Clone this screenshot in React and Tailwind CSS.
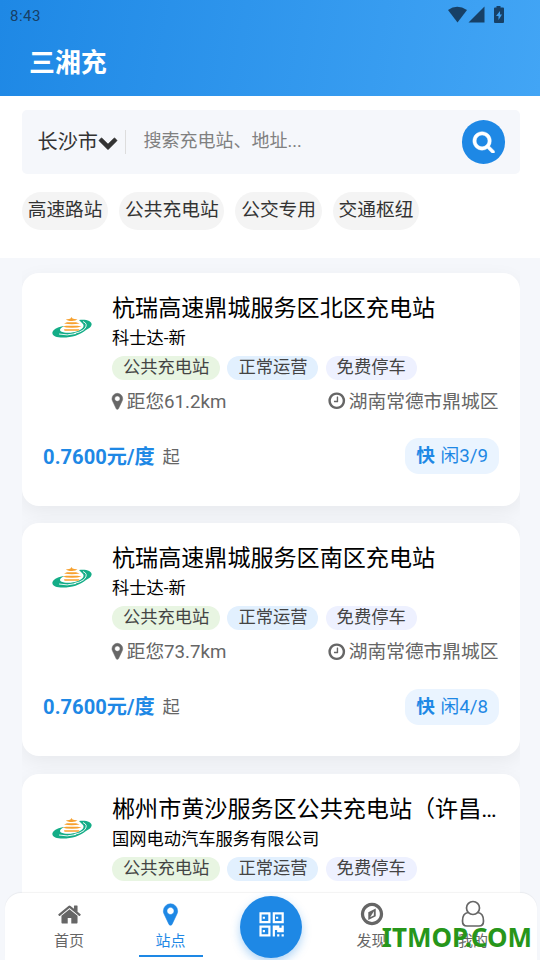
import { useState } from "react";

const ICONS = {
  home: "M1472 992v480q0 26-19 45t-45 19h-384v-384h-256v384h-384q-26 0-45-19t-19-45v-480q0-1 .5-3t.5-3l575-474 575 474q1 2 1 6zm223-69l-62 74q-8 9-21 11h-3q-13 0-21-7l-692-577-692 577q-12 8-24 7-13-2-21-11l-62-74q-8-10-7-23.5t11-21.5l719-599q32-26 76-26t76 26l244 204v-195q0-14 9-23t23-9h192q14 0 23 9t9 23v408l219 182q10 8 11 21.5t-7 23.5z",
  marker: "M1152 640q0-106-75-181t-181-75-181 75-75 181 75 181 181 75 181-75 75-181zm256 0q0 109-33 179l-364 774q-16 33-47.5 52t-67.5 19-67.5-19-46.5-52l-365-774q-33-70-33-179 0-212 150-362t362-150 362 150 150 362z",
  clock: "M1024 544v448q0 14-9 23t-23 9h-320q-14 0-23-9t-9-23v-64q0-14 9-23t23-9h224v-352q0-14 9-23t23-9h64q14 0 23 9t9 23zm416 352q0-148-73-273t-198-198-273-73-273 73-198 198-73 273 73 273 198 198 273 73 273-73 198-198 73-273zm224 0q0 209-103 385.5t-279.5 279.5-385.5 103-385.5-103-279.5-279.5-103-385.5 103-385.5 279.5-279.5 385.5-103 385.5 103 279.5 279.5 103 385.5z",
  search: "M1216 832q0-185-131.5-316.5t-316.5-131.5-316.5 131.5-131.5 316.5 131.5 316.5 316.5 131.5 316.5-131.5 131.5-316.5zm512 832q0 52-38 90t-90 38q-54 0-90-38l-343-342q-179 124-399 124-143 0-273.5-55.5t-225-150-150-225-55.5-273.5 55.5-273.5 150-225 225-150 273.5-55.5 273.5 55.5 225 150 150 225 55.5 273.5q0 220-124 399l343 343q37 37 37 90z",
  chevron: "M1683 808l-742 741q-19 19-45 19t-45-19l-742-741q-19-19-19-45.5t19-45.5l166-165q19-19 45-19t45 19l531 531 531-531q19-19 45-19t45 19l166 165q19 19 19 45.5t-19 45.5z",
  compass: "M768 1121l256-128v-290zm384-609v542l-512 256v-542zm288 384q0-148-73-273t-198-198-273-73-273 73-198 198-73 273 73 273 198 198 273 73 273-73 198-198 73-273zm224 0q0 209-103 385.5t-279.5 279.5-385.5 103-385.5-103-279.5-279.5-103-385.5 103-385.5 279.5-279.5 385.5-103 385.5 103 279.5 279.5 103 385.5z",
  qrcode: "M576 1152v128h-128v-128h128zm0-768v128h-128v-128h128zm768 0v128h-128v-128h128zm-960 1023h384v-383h-384v383zm0-767h384v-384h-384v384zm768 0h384v-384h-384v384zm-256 256v640h-640v-640h640zm512 512v128h-128v-128h128zm256 0v128h-128v-128h128zm0-512v384h-384v-128h-128v384h-128v-640h384v128h128v-128h128zm-768-768v640h-640v-640h640zm768 0v640h-640v-640h640z"
};

const categories = ["高速路站", "公共充电站", "公交专用", "交通枢纽"];

const stations = [
  {
    id: 1,
    name: "杭瑞高速鼎城服务区北区充电站",
    operator: "科士达-新",
    distance: "61.2km",
    address: "湖南常德市鼎城区",
    price: "0.7600",
    free: "3/9"
  },
  {
    id: 2,
    name: "杭瑞高速鼎城服务区南区充电站",
    operator: "科士达-新",
    distance: "73.7km",
    address: "湖南常德市鼎城区",
    price: "0.7600",
    free: "4/8"
  },
  {
    id: 3,
    name: "郴州市黄沙服务区公共充电站（许昌方向）",
    operator: "国网电动汽车服务有限公司"
  }
];

function Icon({ name, className, bold = 0 }) {
  return (
    <svg viewBox="0 0 1792 1792" fill="currentColor" stroke="currentColor" strokeWidth={bold} className={className}>
      <path d={ICONS[name]} />
    </svg>
  );
}

function StatusBar() {
  return (
    <div className="flex h-[30px] items-center justify-between pl-[10px] pr-[35px] text-[#174066]">
      <span className="mt-[2px] text-[15px] font-[450] tracking-[0.500px]">8:43</span>
      <svg width="58" height="18" viewBox="0 0 58 18" fill="currentColor">
        <path d="M1 4Q10 -2.5 20 4L10.5 16.5Z" />
        <path d="M37.5 0.5V16.5H21.5Z" />
        <path d="M49.5 0h4v1.5H56a1 1 0 0 1 1 1V16a1 1 0 0 1-1 1h-8a1 1 0 0 1-1-1V2.500a1 1 0 0 1 1-1h1.500z" />
        <path d="M53 5l-4 5h2.500v4l3.500-5.500h-2z" fill="#3d9ff2" />
      </svg>
    </div>
  );
}

// Operator logo: pavilion on a green swirl
function StationLogo() {
  return (
    <svg width="40" height="24" viewBox="0 0 40 24" className="mt-[24px] shrink-0">
      <path
        d="M27 4C35 3 40.500 5.500 39.500 9C39 11 37 12.500 34 14C28 19 20 21.500 11 21.500C4 21.500 -0.500 19.500 0.500 16C2 12.500 7 10.500 12.500 10C8 12 7 14 9 15.500C13 17.500 21 17 26 15C31 13 33 10 30.500 7.500Z"
        fill="#14ad87"
      />
      <path d="M7 18Q15 20 24 17.500M31 5.500Q37 8 32 13.500Q28 16.500 22 17.500" stroke="white" strokeWidth="0.900" fill="none" />
      <path
        d="M19.500 1L20.500 2.500Q23 3.500 25.500 3.200Q24 5 20 5Q15 5 14 3.200Q17 3.500 18.500 2.500ZM15 6.200H24L27.500 7.500Q20 8.800 12 7.500ZM14 9.800H25.500L29.500 10.500Q26 11.700 20 11.700Q13 11.700 11 10.500ZM12 13.200H27.500L26.500 14.800H12.500Z"
        fill="#f7a12f"
      />
    </svg>
  );
}

function StationCard({ station }) {
  return (
    <div className="h-[233.300px] rounded-[17px] bg-white px-[21.600px] pt-[19px] shadow-[0_6px_20px_rgba(0,0,0,0.06)]">
      <div className="flex">
        <div className="flex w-[68.400px] shrink-0 pl-[8.500px]">
          <StationLogo />
        </div>
        <div className="min-w-0 flex-1">
          <h2 className="-mr-[4px] truncate text-[23.080px] leading-[34px] text-black">{station.name}</h2>
          <p className="-mt-px text-[17.280px] leading-[26px] text-black">{station.operator}</p>
          <div className="mt-[5px] flex gap-[7.300px] text-[17.300px] leading-[22px] text-[#444]">
            <span className="h-6 rounded-full bg-[#e8f5e2] px-[10.900px]">公共充电站</span>
            <span className="h-6 rounded-full bg-[#e2f0fe] px-[10.900px]">正常运营</span>
            <span className="h-6 rounded-full bg-[#eef1ff] px-[10.900px]">免费停车</span>
          </div>
          {station.distance && (
            <div className="mt-[8px] flex justify-between text-[18.720px] leading-[28px] text-[#666]">
              <span className="flex items-center">
                <Icon name="marker" bold={50} className="-ml-[4px] -mt-px size-[18.700px]" />
                距您{station.distance}
              </span>
              <span className="flex items-center">
                <Icon name="clock" className="-mt-px mr-[2px] size-[19.500px]" />
                {station.address}
              </span>
            </div>
          )}
        </div>
      </div>
      {station.price && (
        <div className="mt-[22px] flex items-center justify-between">
          <div className="-ml-[0.500px] mt-[2px] flex items-center">
            <span className="text-[20.160px] font-bold text-[#1e88e5]">{station.price}元/度</span>
            <span className="ml-[8px] mt-[2px] text-[17.280px] text-[#666]">起</span>
          </div>
          <div className="-mr-[0.500px] mt-[0.400px] flex h-9 items-center rounded-[14px] bg-[#eaf4ff] px-[11px] text-[18.720px] text-[#1e88e5]">
            <span className="mr-[5.500px] font-bold">快</span>
            <span>闲{station.free}</span>
          </div>
        </div>
      )}
    </div>
  );
}

function TabItem({ label, active, onClick, children }) {
  return (
    <button
      onClick={onClick}
      className={`flex h-full w-[64px] flex-col items-center border-b-2 pt-[7.500px] ${
        active ? "border-[#1e88e5] text-[#1e88e5]" : "border-transparent text-[#666]"
      }`}
    >
      <span className="flex h-[27px] items-center">{children}</span>
      <span className="text-[15px] leading-[27px]">{label}</span>
    </button>
  );
}

export default function App() {
  const [tab, setTab] = useState("station");

  return (
    <div className="relative flex h-[960px] w-[540px] flex-col overflow-hidden bg-[#f5f7fb] font-['Roboto','Noto_Sans_CJK_SC',sans-serif]">
      <header className="h-24 shrink-0 bg-linear-[100deg] from-[#1e88e5] to-[#42a5f5]">
        <StatusBar />
        <h1 className="pl-[29px] pt-[14px] text-[25.920px] font-bold leading-[38px] text-white">三湘充</h1>
      </header>

      {/* Search and categories */}
      <div className="h-[162px] shrink-0 bg-white pl-[22px] pr-5 pt-[14px]">
        <div className="flex h-16 items-center rounded-[5px] bg-[#f5f7fb] pl-[15.500px] pr-[15px]">
          <button className="flex items-center text-[20.160px] text-[#333]">
            长沙市
            <Icon name="chevron" bold={50} className="size-[20px]" />
          </button>
          <span className="ml-[7px] h-6 w-px bg-[#ddd]" />
          <span className="-mt-[3px] ml-[17.500px] flex-1 text-[18px] text-[#808080]">搜索充电站、地址...</span>
          <button className="flex h-[44px] w-[43px] items-center justify-center rounded-full bg-[#1e88e5] text-white">
            <Icon name="search" bold={30} className="-mt-px size-[23.500px]" />
          </button>
        </div>
        <div className="mt-[18px] flex gap-[11.200px]">
          {categories.map((item) => (
            <span
              key={item}
              className="h-[38px] rounded-full bg-[#f4f4f4] px-[5.700px] text-[18.720px] leading-[36px] text-[#333]"
            >
              {item}
            </span>
          ))}
        </div>
      </div>

      {/* Station list */}
      <div className="ml-[22px] mr-5 flex min-h-0 flex-1 flex-col gap-[17.300px] overflow-hidden pt-[14.600px] *:shrink-0">
        {stations.map((station) => (
          <StationCard key={station.id} station={station} />
        ))}
      </div>

      {/* Bottom tab bar */}
      <nav className="absolute bottom-[3px] left-[5px] flex h-[64px] w-[532px] items-start justify-between rounded-t-[16px] bg-white pl-[32px] pr-[32px] shadow-[0_3px_0_#fff,0_-1px_1px_rgba(0,0,0,0.05)]">
        <TabItem label="首页" active={tab === "home"} onClick={() => setTab("home")}>
          <Icon name="home" className="size-[25px]" />
        </TabItem>
        <TabItem label="站点" active={tab === "station"} onClick={() => setTab("station")}>
          <Icon name="marker" bold={40} className="size-[25px]" />
        </TabItem>
        <button className="mt-[3px] flex size-[62px] items-center justify-center rounded-full bg-[#1e88e5] text-white shadow-[0_4px_10px_rgba(30,136,229,0.35)]">
          <Icon name="qrcode" className="mb-[3px] mr-px size-[31px]" />
        </button>
        <TabItem label="发现" active={tab === "find"} onClick={() => setTab("find")}>
          <Icon name="compass" className="size-[26px]" />
        </TabItem>
        <TabItem label="我的" active={tab === "mine"} onClick={() => setTab("mine")}>
          <svg width="24" height="28" viewBox="0 0 24 28" fill="none" stroke="currentColor" strokeWidth="1.700">
            <circle cx="12" cy="8" r="6.500" />
            <path d="M7 12.500C3 13 1.500 17 1.500 21C1.500 24.500 3 26 6 26H18C21 26 22.500 24.500 22.500 21C22.500 17 21 13 17 12.500" />
          </svg>
        </TabItem>
      </nav>

      <div className="pointer-events-none absolute bottom-[5px] right-[8px] font-['Noto_Sans','Open_Sans',sans-serif] text-[26px] font-bold leading-[36px] text-[#27961a]">
        ITMOP.COM
      </div>
    </div>
  );
}
